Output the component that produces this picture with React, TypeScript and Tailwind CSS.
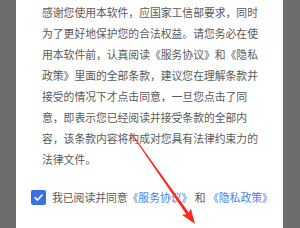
const lines = [
  "感谢您使用本软件，应国家工信部要求，同时",
  "为了更好地保护您的合法权益。请您务必在使",
  "用本软件前，认真阅读《服务协议》和《隐私",
  "政策》里面的全部条款，建议您在理解条款并",
  "接受的情况下才点击同意，一旦您点击了同",
  "意，即表示您已经阅读并接受条款的全部内",
  "容，该条款内容将构成对您具有法律约束力的",
  "法律文件。",
];

export default function App() {
  return (
    <div
      className="relative flex w-[300px] h-[228px] overflow-hidden bg-[#6d6d6d]"
      style={{ fontFamily: '"Noto Sans CJK SC", "Noto Sans", sans-serif' }}
    >
      <div className="w-[16px] shrink-0" />
      <div className="flex-1 bg-white">
        <div className="pt-[2px] pl-[26px] text-[10.8px] leading-[21px] text-[#5a5a5a]">
          {lines.map((l, i) => (
            <div key={i} className="whitespace-nowrap">{l}</div>
          ))}
        </div>
        <div className="mt-[20px] pl-[15px] flex items-center gap-[6px]">
          <div className="w-[15px] h-[15px] rounded-[2px] bg-[#3b6fe6] flex items-center justify-center">
            <svg width="11" height="11" viewBox="0 0 12 12" fill="none">
              <path d="M2.2 6.2 L4.9 8.8 L9.8 3.4" stroke="white" strokeWidth="1.7" strokeLinecap="round" strokeLinejoin="round" />
            </svg>
          </div>
          <div className="whitespace-nowrap text-[10.8px] leading-[15px] text-[#5a5a5a]">
            我已阅读并同意<span className="text-[#4c80e8]">《服务协议》</span> 和 <span className="text-[#4c80e8]">《隐私政策》</span>
          </div>
        </div>
      </div>
      <div className="w-[17px] shrink-0" />
      <svg className="absolute left-0 top-0 pointer-events-none" width="300" height="228" viewBox="0 0 300 228">
        <polygon
          points="130.67,133.23 186.27,214.26 181.9,214.86 195,224 190.9,208.54 188.73,212.54 131.33,132.77"
          fill="#ff2a1c"
        />
      </svg>
    </div>
  );
}
